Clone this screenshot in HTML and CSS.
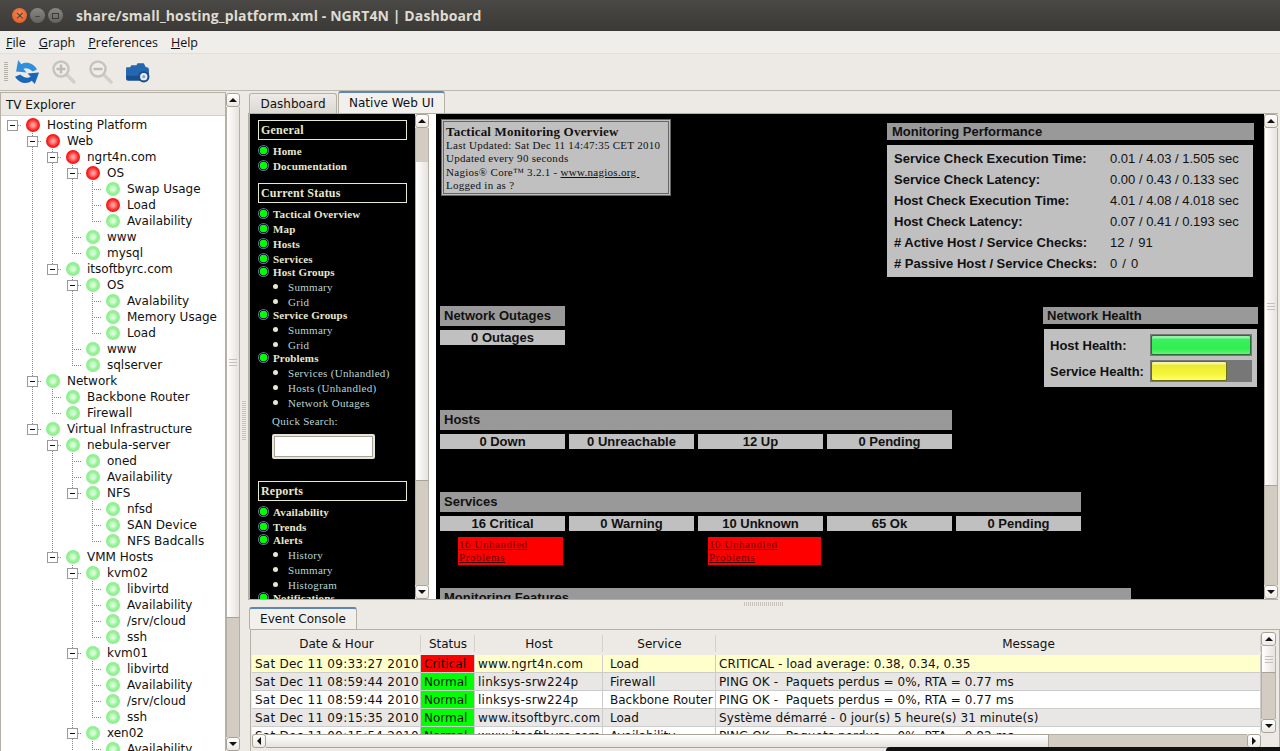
FILE: index.html
```html
<!DOCTYPE html>
<html lang="en">
<head>
    <meta charset="UTF-8">
    <title>NGRT4N | Dashboard</title>
    <meta name="viewport" content="width=device-width, initial-scale=1.0">
    <link rel="stylesheet" href="styles.css">
</head>
<body>
    <header class="titlebar">
        <span class="winbtn close">&#215;</span>
        <span class="winbtn">&#8211;</span>
        <span class="winbtn"><i class="winbtn-max"></i></span>
        <span class="title">share/small_hosting_platform.xml - NGRT4N | Dashboard</span>
    </header>
    <nav class="menubar">
        <span><u>F</u>ile</span>
        <span><u>G</u>raph</span>
        <span><u>P</u>references</span>
        <span><u>H</u>elp</span>
    </nav>
    <div class="toolbar">
        <i class="grip"></i>
        <svg class="tool tool-refresh" viewBox="0 0 24 24">
            <path fill="#2f8fdc" d="M4 0 L2 11 L12 12 L9 8.5 C11 7 15 8 18 11 L22 9 C19 3 12 1 7 4 Z"/>
            <path fill="#1a66b8" d="M24 12 L13 13 L16 16 C13 18 9 17 6 14 L1 16 C5 22 12 24 17 20 L20 23 Z"/>
        </svg>
        <svg class="tool tool-zoom" viewBox="0 0 24 24">
            <path stroke="#d2d0cb" stroke-width="3.5" stroke-linecap="round" d="M15 15 L22 22"/>
            <circle cx="9" cy="9" r="7.5" fill="#efedea" stroke="#c6c4bf" stroke-width="2.5"/>
            <path stroke="#bdbbb6" stroke-width="2.5" d="M4.5 9 H13.5 M9 4.5 V13.5"/>
        </svg>
        <svg class="tool tool-zoom" viewBox="0 0 24 24">
            <path stroke="#d2d0cb" stroke-width="3.5" stroke-linecap="round" d="M15 15 L22 22"/>
            <circle cx="9" cy="9" r="7.5" fill="#efedea" stroke="#c6c4bf" stroke-width="2.5"/>
            <path stroke="#bdbbb6" stroke-width="2.5" d="M4.5 9 H13.5"/>
        </svg>
        <svg class="tool tool-camera" viewBox="0 0 24 20">
            <path fill="#2467b0" d="M2 5 H5 L6 3 H11 L12 1 H18 L20 5 H21 Q23 5 23 8 V14 H1 V6 Q1 5 2 5 Z"/>
            <path fill="#174f92" d="M1 13 H20 V18 H3 Q1 18 1 16 Z"/>
            <circle cx="18" cy="14" r="5.5" fill="#1d4f8c"/>
            <circle cx="18" cy="14" r="3.5" fill="#e8eef6"/>
            <circle cx="18" cy="14" r="1.5" fill="#7fa6d6"/>
        </svg>
    </div>

    <main class="main">
        <aside class="explorer">
            <div class="explorer-list">
                <div class="explorer-head">TV Explorer</div>
                <div class="tree">
                    <div class="node"><i class="n x"></i><b class="led red"></b>Hosting Platform</div>
                    <div class="node"><i class="n"></i><i class="t x"></i><b class="led red"></b>Web</div>
                    <div class="node"><i class="n"></i><i class="v"></i><i class="t x"></i><b class="led red"></b>ngrt4n.com</div>
                    <div class="node"><i class="n"></i><i class="v"></i><i class="v"></i><i class="t x"></i><b class="led red"></b>OS</div>
                    <div class="node"><i class="n"></i><i class="v"></i><i class="v"></i><i class="v"></i><i class="t"></i><b class="led"></b>Swap Usage</div>
                    <div class="node"><i class="n"></i><i class="v"></i><i class="v"></i><i class="v"></i><i class="t"></i><b class="led red"></b>Load</div>
                    <div class="node"><i class="n"></i><i class="v"></i><i class="v"></i><i class="v"></i><i class="c"></i><b class="led"></b>Availability</div>
                    <div class="node"><i class="n"></i><i class="v"></i><i class="v"></i><i class="t"></i><b class="led"></b>www</div>
                    <div class="node"><i class="n"></i><i class="v"></i><i class="v"></i><i class="c"></i><b class="led"></b>mysql</div>
                    <div class="node"><i class="n"></i><i class="v"></i><i class="c x"></i><b class="led"></b>itsoftbyrc.com</div>
                    <div class="node"><i class="n"></i><i class="v"></i><i class="n"></i><i class="t x"></i><b class="led"></b>OS</div>
                    <div class="node"><i class="n"></i><i class="v"></i><i class="n"></i><i class="v"></i><i class="t"></i><b class="led"></b>Avalability</div>
                    <div class="node"><i class="n"></i><i class="v"></i><i class="n"></i><i class="v"></i><i class="t"></i><b class="led"></b>Memory Usage</div>
                    <div class="node"><i class="n"></i><i class="v"></i><i class="n"></i><i class="v"></i><i class="c"></i><b class="led"></b>Load</div>
                    <div class="node"><i class="n"></i><i class="v"></i><i class="n"></i><i class="t"></i><b class="led"></b>www</div>
                    <div class="node"><i class="n"></i><i class="v"></i><i class="n"></i><i class="c"></i><b class="led"></b>sqlserver</div>
                    <div class="node"><i class="n"></i><i class="t x"></i><b class="led"></b>Network</div>
                    <div class="node"><i class="n"></i><i class="v"></i><i class="t"></i><b class="led"></b>Backbone Router</div>
                    <div class="node"><i class="n"></i><i class="v"></i><i class="c"></i><b class="led"></b>Firewall</div>
                    <div class="node"><i class="n"></i><i class="c x"></i><b class="led"></b>Virtual Infrastructure</div>
                    <div class="node"><i class="n"></i><i class="n"></i><i class="t x"></i><b class="led"></b>nebula-server</div>
                    <div class="node"><i class="n"></i><i class="n"></i><i class="v"></i><i class="t"></i><b class="led"></b>oned</div>
                    <div class="node"><i class="n"></i><i class="n"></i><i class="v"></i><i class="t"></i><b class="led"></b>Availability</div>
                    <div class="node"><i class="n"></i><i class="n"></i><i class="v"></i><i class="c x"></i><b class="led"></b>NFS</div>
                    <div class="node"><i class="n"></i><i class="n"></i><i class="v"></i><i class="n"></i><i class="t"></i><b class="led"></b>nfsd</div>
                    <div class="node"><i class="n"></i><i class="n"></i><i class="v"></i><i class="n"></i><i class="t"></i><b class="led"></b>SAN Device</div>
                    <div class="node"><i class="n"></i><i class="n"></i><i class="v"></i><i class="n"></i><i class="c"></i><b class="led"></b>NFS Badcalls</div>
                    <div class="node"><i class="n"></i><i class="n"></i><i class="c x"></i><b class="led"></b>VMM Hosts</div>
                    <div class="node"><i class="n"></i><i class="n"></i><i class="n"></i><i class="t x"></i><b class="led"></b>kvm02</div>
                    <div class="node"><i class="n"></i><i class="n"></i><i class="n"></i><i class="v"></i><i class="t"></i><b class="led"></b>libvirtd</div>
                    <div class="node"><i class="n"></i><i class="n"></i><i class="n"></i><i class="v"></i><i class="t"></i><b class="led"></b>Availability</div>
                    <div class="node"><i class="n"></i><i class="n"></i><i class="n"></i><i class="v"></i><i class="t"></i><b class="led"></b>/srv/cloud</div>
                    <div class="node"><i class="n"></i><i class="n"></i><i class="n"></i><i class="v"></i><i class="c"></i><b class="led"></b>ssh</div>
                    <div class="node"><i class="n"></i><i class="n"></i><i class="n"></i><i class="t x"></i><b class="led"></b>kvm01</div>
                    <div class="node"><i class="n"></i><i class="n"></i><i class="n"></i><i class="v"></i><i class="t"></i><b class="led"></b>libvirtd</div>
                    <div class="node"><i class="n"></i><i class="n"></i><i class="n"></i><i class="v"></i><i class="t"></i><b class="led"></b>Availability</div>
                    <div class="node"><i class="n"></i><i class="n"></i><i class="n"></i><i class="v"></i><i class="t"></i><b class="led"></b>/srv/cloud</div>
                    <div class="node"><i class="n"></i><i class="n"></i><i class="n"></i><i class="v"></i><i class="c"></i><b class="led"></b>ssh</div>
                    <div class="node"><i class="n"></i><i class="n"></i><i class="n"></i><i class="t x"></i><b class="led"></b>xen02</div>
                    <div class="node"><i class="n"></i><i class="n"></i><i class="n"></i><i class="v"></i><i class="t"></i><b class="led"></b>Availability</div>
                </div>
            </div>
            <div class="sb sb-tree">
                <i class="sb-btn up"></i>
                <i class="sb-thumb"></i>
                <i class="sb-trough"></i>
                <i class="sb-btn down"></i>
            </div>
        </aside>

        <div class="split-v"><i class="grip-v"></i></div>

        <section class="right">
            <div class="web">
                <div class="tabs">
                    <span class="tab tab-dash">Dashboard</span>
                    <span class="tab tab-on tab-native">Native Web UI</span>
                </div>
                <div class="webpanel">
                    <div class="nagmenu">
                        <div class="nagmenu-list">
                            <div class="navhead">General</div>
                            <div class="navlist">
                                <div class="navitem">Home</div>
                                <div class="navitem">Documentation</div>
                            </div>
                            <div class="navhead">Current Status</div>
                            <div class="navlist">
                                <div class="navitem">Tactical Overview</div>
                                <div class="navitem">Map</div>
                                <div class="navitem">Hosts</div>
                                <div class="navitem">Services</div>
                                <div class="navitem group">Host Groups</div>
                                <div class="navsub">Summary</div>
                                <div class="navsub">Grid</div>
                                <div class="navitem group">Service Groups</div>
                                <div class="navsub">Summary</div>
                                <div class="navsub">Grid</div>
                                <div class="navitem group">Problems</div>
                                <div class="navsub">Services (Unhandled)</div>
                                <div class="navsub">Hosts (Unhandled)</div>
                                <div class="navsub">Network Outages</div>
                            </div>
                            <div class="quick-label">Quick Search:</div>
                            <div class="quick-input"></div>
                            <div class="navhead navhead-reports">Reports</div>
                            <div class="navlist">
                                <div class="navitem">Availability</div>
                                <div class="navitem">Trends</div>
                                <div class="navitem group">Alerts</div>
                                <div class="navsub">History</div>
                                <div class="navsub">Summary</div>
                                <div class="navsub">Histogram</div>
                                <div class="navitem group">Notifications</div>
                            </div>
                        </div>
                        <div class="sb sb-nav">
                            <i class="sb-btn up"></i>
                            <i class="sb-trough trough-a"></i>
                            <i class="sb-thumb"></i>
                            <i class="sb-trough"></i>
                            <i class="sb-btn down"></i>
                        </div>
                    </div>

                    <div class="canvas">
                        <div class="top">
                            <div class="infobox">
                                <div class="info-title">Tactical Monitoring Overview</div>
                                <div>Last Updated: Sat Dec 11 14:47:35 CET 2010</div>
                                <div>Updated every 90 seconds</div>
                                <div>Nagios&reg; Core&trade; 3.2.1 - <u>www.nagios.org&nbsp;</u></div>
                                <div>Logged in as ?</div>
                            </div>
                            <div class="perf">
                                <div class="bar-head bar-perf">Monitoring Performance</div>
                                <table class="perf-table">
                                    <tr><th>Service Check Execution Time:</th><td>0.01 / 4.03 / 1.505 sec</td></tr>
                                    <tr><th>Service Check Latency:</th><td>0.00 / 0.43 / 0.133 sec</td></tr>
                                    <tr><th>Host Check Execution Time:</th><td>4.01 / 4.08 / 4.018 sec</td></tr>
                                    <tr><th>Host Check Latency:</th><td>0.07 / 0.41 / 0.193 sec</td></tr>
                                    <tr><th># Active Host / Service Checks:</th><td class="counts">12 / 91</td></tr>
                                    <tr><th># Passive Host / Service Checks:</th><td class="counts">0 / 0</td></tr>
                                </table>
                            </div>
                        </div>

                        <div class="mid">
                            <div class="outages">
                                <div class="bar-head">Network Outages</div>
                                <div class="stat">0 Outages</div>
                            </div>
                            <div class="health">
                                <div class="bar-head bar-health">Network Health</div>
                                <div class="health-body">
                                    <div class="health-row">Host Health:<span class="meter"><i class="meter-fill green"></i></span></div>
                                    <div class="health-row">Service Health:<span class="meter"><i class="meter-fill yellow"></i></span></div>
                                </div>
                            </div>
                        </div>

                        <div class="block block-hosts">
                            <div class="bar-head">Hosts</div>
                            <div class="stats">
                                <div class="stat">0 Down</div>
                                <div class="stat">0 Unreachable</div>
                                <div class="stat">12 Up</div>
                                <div class="stat">0 Pending</div>
                            </div>
                        </div>

                        <div class="block block-services">
                            <div class="bar-head">Services</div>
                            <div class="stats">
                                <div class="stat">16 Critical</div>
                                <div class="stat">0 Warning</div>
                                <div class="stat">10 Unknown</div>
                                <div class="stat">65 Ok</div>
                                <div class="stat">0 Pending</div>
                            </div>
                            <div class="problems">
                                <a class="problem prob-a">16 Unhandled Problems</a>
                                <a class="problem prob-b">10 Unhandled Problems</a>
                            </div>
                        </div>

                        <div class="block block-features">
                            <div class="bar-head">Monitoring Features</div>
                        </div>
                    </div>

                    <div class="sb sb-web">
                        <i class="sb-btn up"></i>
                        <i class="sb-thumb"></i>
                        <i class="sb-trough"></i>
                        <i class="sb-btn down"></i>
                    </div>
                </div>
            </div>

            <div class="split-h"><i class="grip-h"></i></div>

            <div class="console">
                <div class="tabs">
                    <span class="tab tab-on tab-console">Event Console</span>
                </div>
                <div class="console-panel">
                    <div class="console-left">
                        <div class="console-table">
                            <table class="events">
                                <colgroup>
                                    <col class="col-date"><col class="col-status"><col class="col-host"><col class="col-service"><col>
                                </colgroup>
                                <thead>
                                    <tr><th>Date &amp; Hour</th><th>Status</th><th>Host</th><th>Service</th><th class="th-msg">Message</th></tr>
                                </thead>
                                <tbody>
                                    <tr class="row-crit"><td class="wide">Sat Dec 11 09:33:27 2010</td><td class="st-crit">Critical</td><td class="wide">www.ngrt4n.com</td><td class="svc">Load</td><td class="msg">CRITICAL - load average: 0.38, 0.34, 0.35</td></tr>
                                    <tr class="row-alt"><td class="wide">Sat Dec 11 08:59:44 2010</td><td class="st-ok">Normal</td><td class="wide">linksys-srw224p</td><td class="svc">Firewall</td><td class="msg">PING OK -&nbsp; Paquets perdus = 0%, RTA = 0.77 ms</td></tr>
                                    <tr><td class="wide">Sat Dec 11 08:59:44 2010</td><td class="st-ok">Normal</td><td class="wide">linksys-srw224p</td><td class="svc">Backbone Router</td><td class="msg">PING OK -&nbsp; Paquets perdus = 0%, RTA = 0.77 ms</td></tr>
                                    <tr class="row-alt"><td class="wide">Sat Dec 11 09:15:35 2010</td><td class="st-ok">Normal</td><td class="wide">www.itsoftbyrc.com</td><td class="svc">Load</td><td class="msg">Système démarré - 0 jour(s) 5 heure(s) 31 minute(s)</td></tr>
                                    <tr><td class="wide">Sat Dec 11 09:15:54 2010</td><td class="st-ok">Normal</td><td class="wide">www.itsoftbyrc.com</td><td class="svc">Availability</td><td class="msg">PING OK -&nbsp; Paquets perdus = 0%, RTA = 0.82 ms</td></tr>
                                </tbody>
                            </table>
                        </div>
                        <div class="sbh">
                            <i class="sb-btn left"></i>
                            <i class="sb-thumb thumb-h"></i>
                            <i class="sb-trough"></i>
                            <i class="sb-btn right-arrow"></i>
                        </div>
                    </div>
                    <div class="sb sb-console">
                        <i class="sb-btn up"></i>
                        <i class="sb-thumb thumb-console"></i>
                        <i class="sb-trough"></i>
                        <i class="sb-btn down"></i>
                    </div>
                </div>
            </div>
        </section>
    </main>

    <!-- corner of the desktop notification peeking in at the bottom -->
    <div class="notify"></div>
</body>
</html>
```

FILE: styles.css
```css
* {
    box-sizing: border-box;
}
html, body {
    height: 100%;
}
body {
    margin: 0;
    overflow: hidden;
    display: flex;
    flex-direction: column;
    background: #edeae5;
    color: #111;
    font-family: "DejaVu Sans", sans-serif;
    font-size: 12px;
    position: relative;
}
i, b {
    display: block;
    font-style: normal;
}

/* window chrome */
.titlebar {
    height: 31px;
    flex: none;
    display: flex;
    align-items: center;
    padding-left: 12px;
    gap: 3px;
    background: linear-gradient(#4a4945, #3a3935);
    color: #dfdbd2;
}
.winbtn {
    width: 15px;
    height: 15px;
    border-radius: 50%;
    background: linear-gradient(#8a8883, #64625d);
    color: #3a3935;
    font-size: 11px;
    line-height: 14px;
    text-align: center;
    display: flex;
    align-items: center;
    justify-content: center;
}
.winbtn.close {
    background: radial-gradient(circle at 50% 40%, #f48a52, #dd5320);
}
.winbtn-max {
    width: 7px;
    height: 6px;
    border: 1px solid #3a3935;
}
.title {
    margin-left: 10px;
    font-family: "Open Sans", sans-serif;
    font-weight: 700;
    font-size: 14px;
    letter-spacing: .11px;
}
.menubar {
    height: 22px;
    flex: none;
    display: flex;
    align-items: center;
    gap: 13px;
    padding-left: 6px;
    background: #f0eeeb;
    font-family: "Open Sans", sans-serif;
    font-size: 12.5px;
}
.toolbar {
    height: 38px;
    flex: none;
    display: flex;
    align-items: center;
    padding-left: 4px;
    background: #edeae5;
    border-top: 1px solid #e2dfda;
    border-bottom: 1px solid #bdb9b1;
}
.grip {
    width: 4px;
    height: 20px;
    background: repeating-linear-gradient(#b5b1a9 0 1px, transparent 1px 2px);
}
.tool {
    flex: none;
    fill: none;
}
.tool-refresh {
    width: 25px;
    height: 25px;
    margin-left: 6px;
}
.tool-zoom {
    width: 24px;
    height: 24px;
    margin-left: 13px;
}
.tool-camera {
    width: 25px;
    height: 21px;
    margin-left: 12px;
}

/* main split */
.main {
    flex: 1;
    min-height: 0;
    display: flex;
}
.explorer {
    width: 240px;
    flex: none;
    display: flex;
    margin-top: 1px;
}
.explorer-list {
    width: 226px;
    flex: none;
    overflow: hidden;
    background: #fff;
    border-left: 1px solid #b5b0a6;
    border-right: 1px solid #b5b0a6;
    border-top: 1px solid #b5b0a6;
}
.explorer-head {
    height: 23px;
    padding: 5px 0 0 5px;
    background: #edeae5;
    border-bottom: 1px solid #d5d1ca;
    font-size: 12px;
}
.tree {
    padding-top: 1px;
}
.node {
    height: 16px;
    display: flex;
    align-items: center;
    white-space: nowrap;
    margin-left: 1px;
}
.node i {
    width: 20px;
    height: 16px;
    flex: none;
    display: flex;
    align-items: center;
    justify-content: center;
}
.node .v {
    background: repeating-linear-gradient(#888 0 1px, transparent 1px 2px) 10px 0 / 1px 100% no-repeat;
}
.node .t {
    background:
        repeating-linear-gradient(#888 0 1px, transparent 1px 2px) 10px 0 / 1px 100% no-repeat,
        repeating-linear-gradient(90deg, #888 0 1px, transparent 1px 2px) 10px 8px / 10px 1px no-repeat;
}
.node .c {
    background:
        repeating-linear-gradient(#888 0 1px, transparent 1px 2px) 10px 0 / 1px 9px no-repeat,
        repeating-linear-gradient(90deg, #888 0 1px, transparent 1px 2px) 10px 8px / 10px 1px no-repeat;
}
.node .x.n {
    background: repeating-linear-gradient(90deg, #888 0 1px, transparent 1px 2px) 10px 8px / 10px 1px no-repeat;
}
.node .x::before {
    content: "";
    width: 9px;
    height: 9px;
    border: 1px solid #999;
    background: linear-gradient(#111, #111) center / 5px 1px no-repeat #fff;
    margin-left: 1px;
}
.led {
    width: 14px;
    height: 14px;
    flex: none;
    margin: 0 7px 0 4px;
    border-radius: 50%;
    background: radial-gradient(circle, #dcffdc 0 15%, #98f298 45%, #84ec84 85%, #b4f2b4 100%);
}
.led.red {
    background: radial-gradient(circle, #ff9a9a 0 15%, #ff2020 55%, #e80808 80%, #c84040 100%);
}

/* scrollbars */
.sb {
    width: 14px;
    flex: none;
    display: flex;
    flex-direction: column;
    background: #edeae5;
}
.sb-btn {
    width: 14px;
    height: 14px;
    flex: none;
    display: flex;
    align-items: center;
    justify-content: center;
    border: 1px solid #a8a399;
    border-radius: 3px;
    background: linear-gradient(#fff, #ece9e4);
}
.sb-btn::before {
    content: "";
    border-style: solid;
    border-color: transparent;
}
.sb-btn.up::before {
    border-width: 0 4px 4px;
    border-bottom-color: #111;
}
.sb-btn.down::before {
    border-width: 4px 4px 0;
    border-top-color: #111;
}
.sb-btn.left::before {
    border-width: 4px 4px 4px 0;
    border-right-color: #111;
}
.sb-btn.right-arrow::before {
    border-width: 4px 0 4px 4px;
    border-left-color: #111;
}
.sb-thumb {
    display: flex;
    align-items: center;
    justify-content: center;
    flex: none;
    background: linear-gradient(90deg, #fff, #e6e3de);
    border-left: 1px solid #b5b0a6;
    border-right: 1px solid #b5b0a6;
    border-bottom: 1px solid #a8a399;
}
.sb-thumb::after {
    content: "";
    width: 8px;
    height: 7px;
    background: repeating-linear-gradient(#c5c1ba 0 1px, transparent 1px 3px);
}
.sb-trough {
    flex: 1;
    background: #d3ccc3;
    border-left: 1px solid #b5b0a6;
    border-right: 1px solid #b5b0a6;
}
.sb-tree {
    height: 658px;
    margin-top: 1px;
}
.sb-tree .sb-thumb {
    height: 511px;
}
.sb-nav .trough-a {
    flex: none;
    height: 34px;
}
.sb-nav .sb-thumb {
    height: 319px;
}
.sb-nav .sb-thumb::after {
    display: none;
}
.sb-web .sb-thumb {
    height: 358px;
}
.sb-console {
    width: 15px;
    height: 101px;
}
.sb-console .sb-btn {
    width: 15px;
}
.thumb-console {
    height: 27px;
}
.sbh {
    height: 14px;
    flex: none;
    display: flex;
}
.sbh .sb-trough {
    border-top: 1px solid #b5b0a6;
    border-bottom: 1px solid #b5b0a6;
    border-left: 0;
    border-right: 0;
}
.thumb-h {
    width: 783px;
    background: linear-gradient(#fff, #e6e3de);
    border: 1px solid #a8a399;
    border-left: 0;
}
.thumb-h::after {
    display: none;
}

/* splitters */
.split-v {
    width: 8px;
    flex: none;
    display: flex;
    align-items: center;
    justify-content: center;
}
.grip-v {
    width: 4px;
    height: 40px;
    background: repeating-linear-gradient(#c8c4bd 0 1px, transparent 1px 2px);
}
.split-h {
    height: 7px;
    flex: none;
    display: flex;
    align-items: center;
    justify-content: center;
}
.grip-h {
    width: 40px;
    height: 4px;
    background: repeating-linear-gradient(90deg, #c8c4bd 0 1px, transparent 1px 2px);
}

/* right side */
.right {
    width: 1032px;
    flex: none;
    display: flex;
    flex-direction: column;
    min-height: 0;
}
.web {
    flex: none;
}
.tabs {
    height: 22px;
    display: flex;
    align-items: flex-end;
    padding-left: 1px;
}
.tab {
    display: flex;
    align-items: center;
    justify-content: center;
    border: 1px solid #b5b0a6;
    border-bottom: 0;
    border-radius: 3px 3px 0 0;
    font-size: 12px;
}
.tab-dash {
    width: 88px;
    height: 20px;
    padding-top: 1px;
    background: linear-gradient(#eeebe6, #dcd8d2);
}
.tab-on {
    height: 22px;
    background: #f2f0ed;
    border-top: 2px solid #5d87ae;
}
.tab-native {
    width: 107px;
    margin-left: 1px;
}
.tab-console {
    width: 108px;
}
.webpanel {
    height: 487px;
    display: flex;
    border: 1px solid #b5b0a6;
    border-left-width: 2px;
    border-right-width: 0;
    background: #000;
    margin-left: 0;
    width: 1030px;
    overflow: hidden;
}
.nagmenu {
    width: 186px;
    flex: none;
    display: flex;
    background: #fff;
}
.nagmenu-list {
    width: 165px;
    flex: none;
    overflow: hidden;
    background: #000;
    padding: 6px 0 0 8px;
    color: #e8e8cc;
    font-family: "Liberation Serif", serif;
}
.navhead {
    width: 149px;
    height: 20px;
    padding-left: 2px;
    border: 1px solid #e8e8cc;
    font-weight: 700;
    font-size: 12px;
    letter-spacing: .2px;
    line-height: 18px;
}
.navhead-reports {
    margin-top: 22px;
}
.navlist {
    margin: 3px 0 10px;
}
.navitem, .navsub {
    height: 15px;
    display: flex;
    align-items: center;
    white-space: nowrap;
    font-size: 11px;
}
.navitem {
    font-weight: 700;
    letter-spacing: .15px;
}
.navitem.group {
    margin-top: -2px;
}
.navitem::before {
    content: "";
    width: 11px;
    height: 11px;
    flex: none;
    margin-right: 4px;
    border-radius: 50%;
    background: radial-gradient(circle, #00ff00 0 3.5px, #1c1c3c 4px 4.5px, #6a6a9c 5px);
}
.navsub {
    padding-left: 15px;
    color: #b8d4d4;
    letter-spacing: .3px;
}
.navsub::before {
    content: "";
    width: 5px;
    height: 5px;
    flex: none;
    margin-right: 10px;
    border-radius: 50%;
    background: #e8e8cc;
}
.quick-label {
    margin: -6px 0 0 14px;
    height: 15px;
    line-height: 15px;
    font-size: 11px;
    letter-spacing: .25px;
    color: #b8d4d4;
}
.quick-input {
    width: 103px;
    height: 25px;
    margin: 5px 0 0 14px;
    background: #fff;
    border: 2px solid #e8e4da;
    border-radius: 2px;
    box-shadow: inset 0 0 0 1px #a8a399;
}
.sb-nav {
    height: 485px;
}

/* tactical overview page */
.canvas {
    width: 828px;
    flex: none;
    background: #000;
    padding: 5px 6px 0 4px;
    overflow: hidden;
    font-family: "Liberation Sans", sans-serif;
    font-size: 13px;
    color: #111;
}
.top {
    height: 187px;
    display: flex;
    justify-content: space-between;
    align-items: flex-start;
}
.infobox {
    width: 230px;
    height: 77px;
    margin-left: 1px;
    padding: 2px 0 0 2px;
    background: #c0c0c0;
    border: 3px double #666;
    font-family: "Liberation Serif", serif;
    font-size: 11px;
    line-height: 13.25px;
    letter-spacing: .28px;
}
.info-title {
    font-size: 13px;
    font-weight: 700;
    line-height: 15px;
    letter-spacing: .2px;
}
.infobox u {
    text-decoration-thickness: 1px;
}
.perf {
    width: 367px;
    margin: 4px 4px 0 0;
}
.bar-head {
    height: 20px;
    padding-left: 4px;
    background: #999;
    font-weight: 700;
    line-height: 19px;
}
.bar-perf {
    height: 17px;
    padding-left: 5px;
    line-height: 17px;
}
.perf-table {
    width: 366px;
    height: 132px;
    margin-top: 5px;
    border-spacing: 0;
    background: #c0c0c0;
    padding: 3px 0;
}
.perf-table tr {
    height: 21px;
}
.perf-table th {
    width: 223px;
    padding: 0 0 0 7px;
    text-align: left;
    font-weight: 700;
    white-space: nowrap;
}
.perf-table td {
    padding: 0;
}
.perf-table .counts {
    word-spacing: 1.5px;
}
.mid {
    height: 104px;
    display: flex;
    justify-content: space-between;
    align-items: flex-start;
}
.outages {
    width: 125px;
}
.stat {
    width: 125px;
    height: 15px;
    background: #c0c0c0;
    font-weight: 700;
    line-height: 15px;
    text-align: center;
}
.outages .stat {
    margin-top: 4px;
}
.health {
    width: 215px;
    margin-top: 1px;
}
.bar-health {
    height: 17px;
    line-height: 17px;
}
.health-body {
    width: 213px;
    height: 58px;
    margin: 5px 0 0 1px;
    padding: 5px 5px 0 6px;
    background: #c0c0c0;
    font-weight: 700;
}
.health-row {
    height: 22px;
    margin-bottom: 4px;
    display: flex;
    align-items: center;
    justify-content: space-between;
}
.meter {
    width: 102px;
    height: 22px;
    padding: 1px;
    background: #777;
}
.meter-fill {
    height: 20px;
    border: 1px solid #2f6a3a;
    border-radius: 2px;
}
.meter-fill.green {
    width: 100px;
    background: linear-gradient(#96f0a8 0 2px, #3cf060 3px, #30ee50 70%, #68f078);
}
.meter-fill.yellow {
    width: 76px;
    border-color: #6a6a20;
    background: linear-gradient(#f4f4a8 0 2px, #eaea30 3px, #f6f640 70%, #ffff60);
}
.block-hosts {
    width: 512px;
    height: 82px;
}
.block-services {
    width: 641px;
    height: 96px;
}
.block-features {
    width: 691px;
}
.stats {
    display: flex;
    gap: 4px;
    margin-top: 4px;
}
.problems {
    display: flex;
    margin-top: 6px;
}
.problem {
    height: 28px;
    padding: 1px 0 0 1px;
    background: #f00;
    color: #600;
    font-family: "Liberation Serif", serif;
    font-size: 11px;
    line-height: 13px;
    letter-spacing: .55px;
    text-decoration: underline #300;
}
.prob-a {
    width: 105px;
    margin-left: 18px;
    padding-right: 30px;
}
.prob-b {
    width: 113px;
    margin-left: 145px;
    padding-right: 38px;
}
.sb-web {
    height: 485px;
}

/* event console */
.console {
    flex: 1;
    min-height: 0;
}
.console-panel {
    height: 122px;
    width: 1030px;
    margin-left: 2px;
    display: flex;
    padding: 2px 2px 0 1px;
    border: 1px solid #b5b0a6;
    border-bottom: 0;
    background: #edeae5;
}
.console-left {
    width: 1009px;
    flex: none;
    display: flex;
    flex-direction: column;
}
.console-table {
    height: 102px;
    flex: none;
    overflow: hidden;
}
.events {
    width: 1009px;
    table-layout: fixed;
    border-spacing: 0;
    font-size: 12px;
}
.col-date {
    width: 169px;
}
.col-status {
    width: 54px;
}
.col-host {
    width: 128px;
}
.col-service {
    width: 113px;
}
.events th {
    height: 23px;
    padding: 0;
    font-weight: 400;
    background: linear-gradient(90deg, transparent calc(100% - 1px), #d5d1ca 0) center / 100% 17px no-repeat #edeae5;
}
.events .th-msg {
    padding-left: 80px;
}
.events td {
    height: 18px;
    padding: 0 0 0 3px;
    background: #fff;
    border-right: 1px solid #ccc;
    border-bottom: 1px solid #ccc;
    white-space: nowrap;
    overflow: hidden;
}
.events .wide {
    letter-spacing: .25px;
}
.events .svc {
    padding-left: 7px;
}
.events .msg {
    letter-spacing: .08px;
}
.events .row-crit td {
    background: #ffffcc;
}
.events .row-alt td {
    background: #e8e7e5;
}
.events td.st-crit {
    background: #f00;
}
.events td.st-ok {
    background: #0f0;
}
.notify {
    position: absolute;
    left: 886px;
    right: 0;
    bottom: 0;
    height: 4px;
    background: #111;
    border-radius: 4px 0 0 0;
}
```
